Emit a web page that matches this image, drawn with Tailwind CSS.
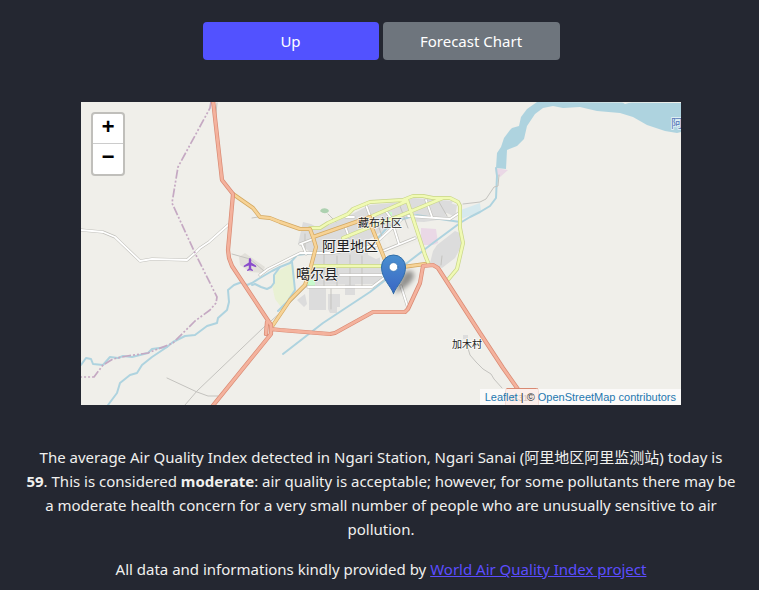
<!DOCTYPE html>
<html lang="en">
<head>
<meta charset="utf-8">
<meta name="viewport" content="width=device-width, initial-scale=1">
<title>Air Quality Index</title>
<script src="https://cdn.jsdelivr.net/npm/@tailwindcss/browser@4"></script>
</head>
<body class="min-h-screen bg-[#242731] pt-[22px] pl-[3px] font-['Segoe_UI','Noto_Sans','Noto_Sans_CJK_SC',sans-serif] text-[15px] leading-6 text-[#f0f0ee]">
<main class="flex flex-col items-center">
  <div class="flex w-full justify-center gap-1 px-4">
    <button type="button" class="h-[38px] w-full max-w-44 rounded bg-[#5252ff] text-white">Up</button>
    <button type="button" class="h-[38px] w-full max-w-[177px] rounded bg-[#6e757d] text-white">Forecast Chart</button>
  </div>

  <section aria-label="Station map" class="relative mt-[42px] w-full max-w-[600px] overflow-hidden bg-[#f0efea] font-['Liberation_Sans',sans-serif]">
    <svg class="block w-full" viewBox="81 102 600 303" fill="none" stroke-linejoin="round" stroke-linecap="round" role="img" aria-label="Map of Ngari">
      <defs>
        <linearGradient id="pin" x1="0" y1="0" x2="0" y2="1"><stop offset="0" stop-color="#4a90d0"/><stop offset="1" stop-color="#3a66c4"/></linearGradient>
        <filter id="soft" x="-50%" y="-50%" width="200%" height="200%"><feGaussianBlur stdDeviation="2.5"/></filter>
      </defs>
      <rect x="81" y="102" width="600" height="303" fill="#f0efea"/>

      <!-- built-up areas -->
      <g fill="#dcdcdc">
        <path d="M303 222l8 2 9 5 30-14 20-10 33-3 10-4 40 3-8 14 5 3-26 4-24-1-18 11-8 12 6 10v12l12 4-10 14-76 1 2-14 4-18-14-9z"/>
        <path d="M437 245l18-14 5 2 2 12-7 13-13 10-12-5 3-12z"/>
        <path d="M309 288h17v22h-17zM328 294h12v13h-3v6h-7l-2-4zM345 281h10v14h-10zM297 300l8-6 2 10-3 3zM443 201l14 4-2 12-16-8z"/>
        <path d="M463 335h5v4h-5z"/>
        <path d="M239 257l6-4 20 14-3 6-12-1-10-7z" fill="#e2e0da"/>
      </g>
      <path d="M368 240l13-8 8 22-13 5-8-4zM385 227l29-11 8 24-30 12z" fill="#eeede8"/>
      <path d="M421 228l15 1 2 14-5 2h-12zM495 168l13 2-8 7-4-3z" fill="#ead8e6"/>
      <path d="M290 264l4 2 1 25-14 16-6-8-3-14 3-12z" fill="#e9f1d4"/>
      <path d="M308 280h7v6h-8zM388 212h4v7h-4z" fill="#c8facc"/>
      <path d="M320 211c2-4 8-3 9 0-2 3-6 3-9 0z" fill="#add1b0"/>

      <!-- water -->
      <path d="M458 211l22-8 1 8-20 8z" fill="#d6e9ee"/>
      <path fill="#aed3df" d="M537 102l-10 7-6 8-2 9-7 2-2 2-6 8-3 9-4 6-1 15 10 1 1-19 10-4 7-7 3-13 8-12 8-6 10-2 10 2 17-1 17 4 23 2 13 4 14 8 18 6 12 2 4-1v-29z"/>
      <path d="M622 102h10l-7 2z" fill="#f0efea"/>
      <g stroke="#aed3df" stroke-width="2">
        <path d="M496 168l1 8-1 22-6 8-10 6-10 5-10 6-27 20-26 20-37 29-47 31-40 31"/>
        <path d="M460 222l-20-3-23-4-17 5-14 9-8 9M323 252l-26 3-7 8-10 4-8 4-12 7-8 5-5 2-5-3-8 3-6 5 1 12-2 8-9 8-1 5-10 3-12 9-10 1-12 6-6 5-15 10-10 8-5 8-7 2-10 8-3 10-9 12"/>
        <path d="M167 347l-15 2-4 4-16 4-9-1-5 2-8-1-7 8-10-1-2-5-5-1-5 7M252 285l3-1 6 3 6 2 4-2 3-4v-8l6-8M292 262l3 28-8 12-9 9"/>
      </g>

      <!-- minor roads -->
      <g stroke="#c4c3bf" stroke-width="1">
        <path d="M185 405l12-14 66-63 17-15 28-28M167 378l30 14 11 4h10M217 103l-2 20M252 218l6-1M499 175l-1 11-4 1-8 12-6 3-17 2M467 345l3 10 6 7 7 7 8 5 3 5 8 9M328 214l8 8"/>
        <path d="M441 265l1-9M305 250v-16M324 254v33M337 256v30M350 255v30M362 256v30M331 289v20M376 220l6 16M400 206l8 22M439 202l8 14M232 254l18 5 14 12"/>
      </g>
      <g id="streets">
        <g stroke="#c1c0bb" stroke-width="3">
          <path d="M81 230l22 2 12 5 25 24 12-2 35 1 8-7 5-5 9-6 19-17M260 275l8-6 12-6 20-10h33l46-8M308 287h64l12-9M340 275h42l4 4M300 244l13-5M302 244l4 10M345 226l4 11M366 205l4 11M385 210l6 8 8 26M383 251l32-13M401 220l-22 20M408 216l42 3 9-6M426 200l6 17M346 217l8 0M401 286l7 22"/>
        </g>
        <g stroke="#fff" stroke-width="1.8">
          <path d="M81 230l22 2 12 5 25 24 12-2 35 1 8-7 5-5 9-6 19-17M260 275l8-6 12-6 20-10h33l46-8M308 287h64l12-9M340 275h42l4 4M300 244l13-5M302 244l4 10M345 226l4 11M366 205l4 11M385 210l6 8 8 26M383 251l32-13M401 220l-22 20M408 216l42 3 9-6M426 200l6 17M346 217l8 0M401 286l7 22"/>
        </g>
      </g>

      <!-- administrative boundary -->
      <path d="M211 102l-1 6-32 59-6 36 23 50 22 44-1 6-6 7-15 11-22 22-25 10-21 3-14 3-10 6-9 12H81" stroke="#c5a9c3" stroke-width="1.7" stroke-dasharray="9 2 2 2 2 2" stroke-linecap="butt"/>

      <!-- tertiary roads -->
      <g stroke="#c9d589" stroke-width="4">
        <path d="M310 228h10l8-5 20-9 5-5 17-7 33-2 10-4h10l10 2 17 0 8 4 2 4 0 22 3 15-6 26-10 12M370 217l37-16M343 238l27-11 27-10 46-19M407 200l18 55 4 10M313 266h72"/>
      </g>
      <g stroke="#f0fab4" stroke-width="2.6">
        <path d="M310 228h10l8-5 20-9 5-5 17-7 33-2 10-4h10l10 2 17 0 8 4 2 4 0 22 3 15-6 26-10 12M370 217l37-16M343 238l27-11 27-10 46-19M407 200l18 55 4 10M313 266h72"/>
      </g>
      <!-- secondary roads -->
      <g stroke="#d3a862" stroke-width="4">
        <path d="M233 194l20 14 7 9 10 1 10 4 20 7h10l3 8 3 10-6 23-5 15-15 15-19 28M313 237l57-20v6l13 32 5 13 15-1 22-3"/>
      </g>
      <g stroke="#f7d396" stroke-width="2.6">
        <path d="M233 194l20 14 7 9 10 1 10 4 20 7h10l3 8 3 10-6 23-5 15-15 15-19 28M313 237l57-20v6l13 32 5 13 15-1 22-3"/>
      </g>
      <!-- primary roads -->
      <g stroke="#d98a73" stroke-width="4.2">
        <path d="M213 100l9 80 11 14-4 45-1 11 1 8 3 8 39 59v9l-60 74M267 322l-1 12M271 329l9 1 50 4 5-1 38-21h32l3-3 12-26 3-17 10-1 5 3 42 65 23 35 24 34"/>
      </g>
      <g stroke="#f4b29d" stroke-width="2.8">
        <path d="M213 100l9 80 11 14-4 45-1 11 1 8 3 8 39 59v9l-60 74M267 322l-1 12M271 329l9 1 50 4 5-1 38-21h32l3-3 12-26 3-17 10-1 5 3 42 65 23 35 24 34"/>
      </g>

      <!-- airport -->
      <path fill="#8a4dcb" d="M250 258c.9 0 1.2 1 1.2 2v2.500l5 3.200v1.500l-5-1.600v3l1.700 1.300v1.100l-2.900-.8-2.900.8v-1.100l1.700-1.300v-3l-5 1.600v-1.500l5-3.200V260c0-1 .3-2 1.200-2z"/>

      <!-- place names -->
      <g class="font-['Noto_Sans_CJK_SC',sans-serif]" text-anchor="middle" fill="#222" stroke="#fff" stroke-opacity=".6" stroke-width="2" paint-order="stroke">
        <text x="380" y="227" font-size="11">藏布社区</text>
        <text x="350" y="251" font-size="14">阿里地区</text>
        <text x="317" y="279" font-size="14">噶尔县</text>
        <text x="467" y="348" font-size="10">加木村</text>
        <text x="677" y="128" font-size="12" fill="#5576b8">阿</text>
      </g>
      <g>
        <rect x="505.500" y="388.500" width="33" height="18" rx="2" fill="#f4c8bb" stroke="#d98a73"/>
        <text x="522" y="401" text-anchor="middle" font-size="9" fill="#6d3a30">G317</text>
      </g>

      <!-- marker -->
      <path d="M394 294l9-20c5-6 12-3 11 2-1 6-10 13-20 18z" fill="#000" fill-opacity=".4" filter="url(#soft)"/>
      <path d="M393.500 293.500c-3-8-12-15-12-26.500a12 12 0 0 1 24 0c0 11.500-9 18.500-12 26.500z" fill="url(#pin)" stroke="#2f6da8" stroke-width="1"/>
      <circle cx="393.500" cy="267" r="4.300" fill="#fff" stroke="#2f6da8" stroke-width=".6"/>
    </svg>

    <div class="absolute top-2.5 left-2.5 flex w-[34px] flex-col rounded border-2 border-black/20 bg-white bg-clip-padding font-['Liberation_Mono',monospace] text-[22px] font-bold text-black">
      <button type="button" aria-label="Zoom in" class="flex h-[30px] items-center justify-center border-b border-[#ccc]">+</button>
      <button type="button" aria-label="Zoom out" class="flex h-[30px] items-center justify-center">−</button>
    </div>
    <div class="absolute right-0 bottom-0 bg-white/70 px-[5px] text-[11px] leading-4 whitespace-nowrap text-[#333]"><a href="#" class="text-[#1f78b0]">Leaflet</a> | © <a href="#" class="text-[#1f78b0]">OpenStreetMap contributors</a></div>
  </section>

  <div class="mt-10 flex flex-col gap-4 px-5 text-center">
    <p>The average Air Quality Index detected in Ngari Station, Ngari Sanai (阿里地区阿里监测站) today is<br> <b>59</b>. This is considered <b>moderate</b>: air quality is acceptable; however, for some pollutants there may be a moderate health concern for a very small number of people who are unusually sensitive to air pollution.</p>
    <p>All data and informations kindly provided by <a href="#" class="text-[#5c4dff] underline">World Air Quality Index project</a></p>
  </div>
</main>
</body>
</html>
